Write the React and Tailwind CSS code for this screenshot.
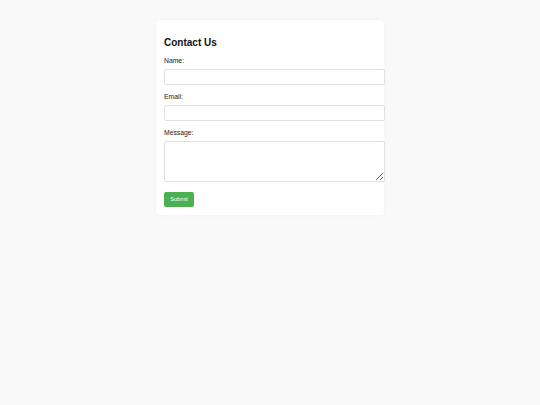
export default function App() {
  return (
    <div
      className="min-h-screen w-full bg-[#f9f9f9] pt-[20px]"
      style={{ fontFamily: '"Liberation Sans", Arial, sans-serif' }}
    >
      <div className="mx-auto flex w-[228px] flex-col rounded-[4px] bg-white px-[8px] pb-[8px] pt-[17px] shadow-[0_0_4px_rgba(0,0,0,0.03)]">
        <h2 className="text-[10px] font-bold leading-[11px] text-[#111]">Contact Us</h2>
        <label className="mt-[9px] block text-[6.8px] leading-[8px] text-[#222]">Name:</label>
        <input
          type="text"
          className="mt-[4px] block h-[16px] w-[221px] rounded-[2px] border border-[#e0e0e0] bg-white"
        />
        <label className="mt-[8px] block text-[6.8px] leading-[8px] text-[#222]">Email:</label>
        <input
          type="email"
          className="mt-[4px] block h-[16px] w-[221px] rounded-[2px] border border-[#e0e0e0] bg-white"
        />
        <label className="mt-[8px] block text-[6.8px] leading-[8px] text-[#222]">Message:</label>
        <textarea
          className="mt-[4px] block h-[41px] w-[221px] rounded-[2px] border border-[#e0e0e0] bg-white"
        />
        <div className="mt-[10px] flex">
          <button className="flex h-[15px] w-[30px] items-center justify-center rounded-[2px] bg-[#4caf50] text-[5.7px] leading-none text-white">
            Submit
          </button>
        </div>
      </div>
    </div>
  );
}
